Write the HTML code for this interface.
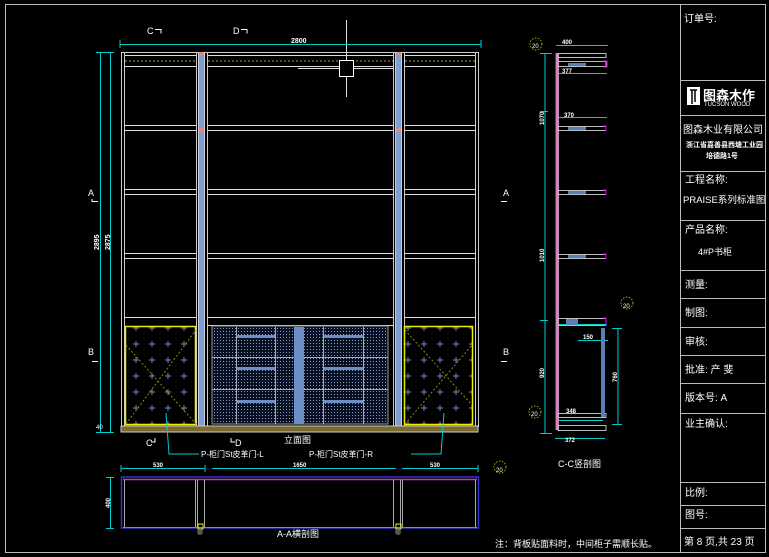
<!DOCTYPE html>
<html><head><meta charset="utf-8"><style>
body{margin:0;background:#000;width:769px;height:557px;overflow:hidden}
svg{display:block}
text{font-family:"Liberation Sans","Noto Sans CJK SC",sans-serif;fill:#fff}
</style></head><body>
<svg width="769" height="557" viewBox="0 0 769 557" xmlns="http://www.w3.org/2000/svg">
<defs>
<pattern id="dots" width="3" height="3" patternUnits="userSpaceOnUse"><rect width="3" height="3" fill="#0a1020"/><rect x="1" y="1" width="1" height="1" fill="#7a9fd8"/></pattern>
<pattern id="plus" width="16" height="16" patternUnits="userSpaceOnUse"><path d="M5 8h6M8 5v6" stroke="#6a8fc8" stroke-width="1"/></pattern>
</defs>
<rect x="5.5" y="4.5" width="760" height="548" fill="none" stroke="#bbb"/>
<line x1="680.5" y1="4" x2="680.5" y2="553" stroke="#bbb"/>
<g stroke="#bbb">
<line x1="680" y1="80.5" x2="766" y2="80.5"/><line x1="680" y1="115.5" x2="766" y2="115.5"/>
<line x1="680" y1="171.5" x2="766" y2="171.5"/><line x1="680" y1="220.5" x2="766" y2="220.5"/>
<line x1="680" y1="270.5" x2="766" y2="270.5"/><line x1="680" y1="298.5" x2="766" y2="298.5"/>
<line x1="680" y1="327.5" x2="766" y2="327.5"/><line x1="680" y1="355.5" x2="766" y2="355.5"/>
<line x1="680" y1="383.5" x2="766" y2="383.5"/><line x1="680" y1="413.5" x2="766" y2="413.5"/>
<line x1="680" y1="482.5" x2="766" y2="482.5"/><line x1="680" y1="505.5" x2="766" y2="505.5"/>
<line x1="680" y1="528.5" x2="766" y2="528.5"/>
</g>
<g font-size="10">
<text x="684" y="22">订单号:</text>
<rect x="687" y="87" width="13" height="18" fill="#fff"/><path d="M690 90h7M692 90v14M695 90v12" stroke="#000" stroke-width="1.5"/>
<text x="703" y="100" font-size="13" font-weight="bold">图森木作</text>
<text x="704" y="106" font-size="6">TUCSON WOOD</text>
<text x="683" y="133">图森木业有限公司</text>
<text x="686" y="147" font-size="7" font-weight="bold">浙江省嘉善县西塘工业园</text>
<text x="706" y="158" font-size="7" font-weight="bold">培德路1号</text>
<text x="685" y="183">工程名称:</text>
<text x="683" y="203" font-size="9.5">PRAISE系列标准图</text>
<text x="685" y="233">产品名称:</text>
<text x="698" y="255" font-size="9">4#P书柜</text>
<text x="685" y="288">测量:</text>
<text x="685" y="316">制图:</text>
<text x="685" y="345">审核:</text>
<text x="685" y="373">批准: 产  斐</text>
<text x="685" y="401">版本号:  A</text>
<text x="685" y="427">业主确认:</text>
<text x="685" y="496">比例:</text>
<text x="685" y="518">图号:</text>
<text x="684" y="545">第 8 页,共 23 页</text>
</g>
<g stroke="#ccc" fill="none" stroke-width="1">
<rect x="121.5" y="52.5" width="357" height="374"/>
<line x1="124.5" y1="53" x2="124.5" y2="426"/><line x1="475.5" y1="53" x2="475.5" y2="426"/>
<line x1="207.5" y1="53" x2="207.5" y2="426"/><line x1="393.5" y1="53" x2="393.5" y2="426"/>
<line x1="196.5" y1="53" x2="196.5" y2="426"/><line x1="404.5" y1="53" x2="404.5" y2="426"/>
</g>
<rect x="198" y="53" width="7" height="373" fill="#7f9fd0"/><rect x="395" y="53" width="7" height="373" fill="#7f9fd0"/>
<path d="M198.5 53v373M204.5 53v373M395.5 53v373M401.5 53v373" stroke="#ccd"/>
<g stroke="#ddd">
<path d="M125 55.5h71M208 55.5h185M405 55.5h70M125 66.5h71M208 66.5h185M405 66.5h70"/>
<path d="M125 125.5h71M208 125.5h185M405 125.5h70M125 130.5h71M208 130.5h185M405 130.5h70"/>
<path d="M125 189.5h71M208 189.5h185M405 189.5h70M125 194.5h71M208 194.5h185M405 194.5h70"/>
<path d="M125 253.5h71M208 253.5h185M405 253.5h70M125 258.5h71M208 258.5h185M405 258.5h70"/>
<path d="M125 317.5h71M208 317.5h185M405 317.5h70M208 325.5h185"/>
</g>
<path d="M125 61h71M208 61h185M405 61h70" stroke="#aa9a20" stroke-dasharray="2 2"/>
<g fill="#e86"><rect x="199" y="128" width="4" height="4"/><rect x="397" y="128" width="4" height="4"/><rect x="199" y="52" width="4" height="3"/><rect x="397" y="52" width="4" height="3"/></g>
<path d="M346.5 20v77M298 68.5h95" stroke="#ddd"/><rect x="339.5" y="60.5" width="14" height="16" fill="#000" stroke="#fff"/>
<rect x="125.5" y="326.5" width="70" height="98" fill="url(#plus)" stroke="#ee0" stroke-width="1.5"/>
<rect x="404.5" y="326.5" width="68" height="98" fill="url(#plus)" stroke="#ee0" stroke-width="1.5"/>
<path d="M126 424L196 330M126 345L196 424M405 424L472 345M405 330L472 405" stroke="#880" stroke-dasharray="2 2"/>
<rect x="212" y="326" width="176" height="98" fill="url(#dots)" stroke="#999"/>
<g stroke="#aaa"><path d="M212 357.5h176M212 389.5h176M236.5 327v97M275.5 327v97M323.5 327v97M363.5 327v97"/></g>
<g fill="#6b8fc5"><rect x="294" y="327" width="10" height="97"/><rect x="237" y="335" width="38" height="3"/><rect x="324" y="335" width="39" height="3"/><rect x="237" y="367" width="38" height="3"/><rect x="324" y="367" width="39" height="3"/><rect x="237" y="400" width="38" height="3"/><rect x="324" y="400" width="39" height="3"/></g>
<rect x="121" y="426" width="357" height="6" fill="#7a6a30" stroke="#ccc"/>
<g stroke="#0cc" fill="none"><path d="M120 44.5h361M120 40v8M481 40v8M100.5 52v380M110.5 52v380M96 52.5h18M96 432.5h18"/></g>
<text x="291" y="43" font-size="7" font-weight="bold">2800</text>
<text x="0" y="0" font-size="7" font-weight="bold" transform="translate(99,250) rotate(-90)">2895</text>
<text x="0" y="0" font-size="7" font-weight="bold" transform="translate(110,250) rotate(-90)">2875</text>
<text x="96" y="429" font-size="6">40</text>
<g font-size="9"><text x="147" y="34">C</text><text x="233" y="34">D</text><text x="88" y="196">A</text><text x="503" y="196">A</text><text x="88" y="355">B</text><text x="503" y="355">B</text><text x="146" y="446">C</text><text x="235" y="446">D</text></g>
<path d="M155 29.5h6v4M241 29.5h6v4M92 201.5h6M92 199v3M501 201.5h6M92 361.5h6M501 361.5h6M155 438v4h-4M231 438v4h4" stroke="#fff" fill="none"/>
<text x="284" y="443" font-size="9">立面图</text>
<path d="M166 413l3 41h30M444 413l-3 41h-30" stroke="#0cc" fill="none"/>
<text x="201" y="457" font-size="8">P-柜门St皮革门-L</text>
<text x="309" y="457" font-size="8">P-柜门St皮革门-R</text>
<g stroke="#0cc" fill="none"><path d="M545 53v380M540 53.5h12M540 433.5h12M540 111.5h8M540 320.5h8M556 45.5h52M557 73.5h50M557 117.5h50M557 324.5h50M555 420.5h48M555 438.5h50M618 328v96M612 328.5h10M612 424.5h10M578 340.5h30"/></g>
<rect x="556" y="53" width="3" height="377" fill="#c8b"/><line x1="555.5" y1="53" x2="555.5" y2="430" stroke="#33f"/>
<g fill="none" stroke="#bbb"><rect x="558" y="53.5" width="48" height="4"/><rect x="558" y="61.5" width="48" height="5"/><rect x="558" y="126.5" width="48" height="4"/><rect x="558" y="190.5" width="48" height="4"/><rect x="558" y="254.5" width="48" height="4"/><rect x="558" y="318.5" width="48" height="7"/><rect x="558" y="413.5" width="48" height="4"/><rect x="558" y="425.5" width="48" height="5"/></g>
<g fill="#5b7fb5"><rect x="568" y="63" width="18" height="3"/><rect x="568" y="127" width="18" height="3"/><rect x="568" y="191" width="18" height="3"/><rect x="568" y="255" width="18" height="3"/><rect x="566" y="319" width="12" height="6"/><rect x="601" y="328" width="4" height="89"/></g>
<g stroke="#e0e" fill="none"><path d="M603 61h4v6h-4M603 126h3v5M603 190h3v5M603 254h3v5M603 318h3v8"/></g>
<g font-size="6" font-weight="bold"><text x="562" y="44">400</text><text x="562" y="73">377</text><text x="564" y="117">370</text><text x="583" y="339">150</text><text x="566" y="413">348</text><text x="565" y="442">372</text></g>
<text x="0" y="0" font-size="6" font-weight="bold" transform="translate(544,125) rotate(-90)">1070</text>
<text x="0" y="0" font-size="6" font-weight="bold" transform="translate(544,262) rotate(-90)">1010</text>
<text x="0" y="0" font-size="6" font-weight="bold" transform="translate(544,378) rotate(-90)">920</text>
<text x="0" y="0" font-size="6" font-weight="bold" transform="translate(617,382) rotate(-90)">760</text>
<circle cx="536" cy="44" r="6" fill="none" stroke="#aa0" stroke-dasharray="1.5 1.5"/><text x="532" y="48" font-size="6">20</text>
<circle cx="627" cy="303" r="6" fill="none" stroke="#aa0" stroke-dasharray="1.5 1.5"/><text x="623" y="308" font-size="6">20</text>
<circle cx="535" cy="412" r="6" fill="none" stroke="#aa0" stroke-dasharray="1.5 1.5"/><text x="531" y="416" font-size="6">20</text>
<text x="558" y="467" font-size="9">C-C竖剖图</text>
<g stroke="#0cc" fill="none"><path d="M121 468.5h84M121 465v7M205 465v7M212 468.5h184M402 468.5h76M478 465v7M110.5 477v51M106 477.5h8M106 528.5h8"/></g>
<g font-size="6" font-weight="bold"><text x="153" y="467">530</text><text x="293" y="467">1650</text><text x="430" y="467">530</text></g>
<text x="0" y="0" font-size="6" font-weight="bold" transform="translate(110,508) rotate(-90)">400</text>
<rect x="121.5" y="477" width="357" height="51" fill="none" stroke="#33c" stroke-width="1.5"/>
<line x1="123" y1="479.5" x2="477" y2="479.5" stroke="#c3c" stroke-width="1.5"/>
<line x1="123" y1="527.5" x2="477" y2="527.5" stroke="#889"/>
<g stroke="#aaa"><path d="M124.5 480v47M195.5 480v47M197.5 480v47M204.5 480v47M393.5 480v47M400.5 480v47M402.5 480v47M475.5 480v47"/></g>
<rect x="198" y="524" width="5" height="5" fill="none" stroke="#ee0"/><rect x="396" y="524" width="5" height="5" fill="none" stroke="#ee0"/>
<circle cx="200" cy="532" r="3" fill="#555"/><circle cx="398" cy="532" r="3" fill="#555"/>
<circle cx="500" cy="467" r="6" fill="none" stroke="#aa0" stroke-dasharray="1.5 1.5"/><text x="496" y="472" font-size="6">20</text>
<text x="277" y="537" font-size="9">A-A横剖图</text>
<text x="495" y="547" font-size="9">注：背板贴面料时，中间柜子需顺长贴。</text>
</svg>
</body></html>
